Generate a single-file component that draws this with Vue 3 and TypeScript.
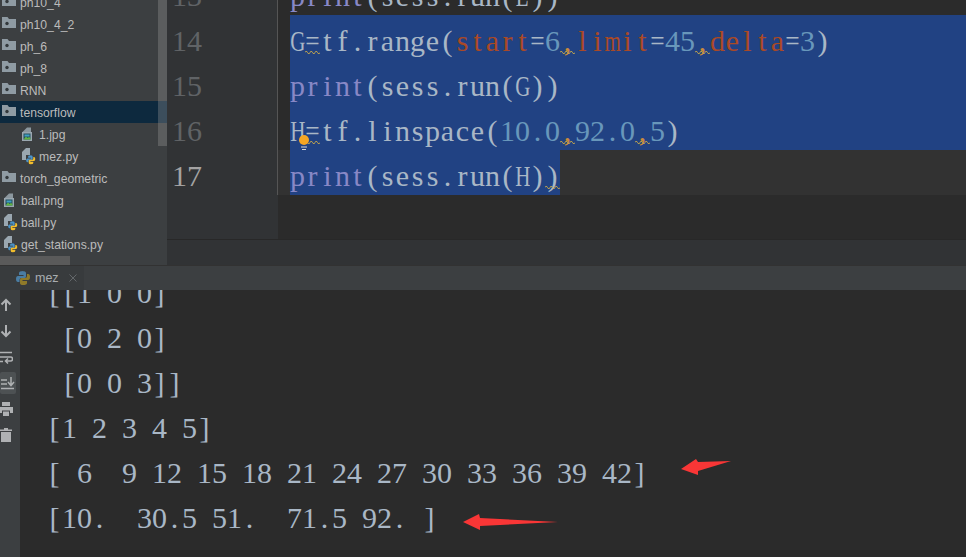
<script setup lang="ts">
import { computed } from "vue";

defineOptions({ name: "PycharmWindow" });

type Kind = "" | "fn" | "param" | "num" | "warn";
interface Token {
    t: string;
    k?: Kind;
}
interface CodeLine {
    no: number;
    tokens: Token[];
    full?: boolean; // selection runs to the right edge
    part?: boolean; // selection stops at the last char
    current?: boolean;
    waves?: number[];
}

const CODE: CodeLine[] = [
    { no: 13, tokens: [{ t: "print", k: "fn" }, { t: "(sess.run(E))" }] },
    {
        no: 14,
        full: true,
        waves: [1, 18, 27],
        tokens: [
            { t: "G=tf.range(" },
            { t: "start", k: "param" },
            { t: "=" },
            { t: "6", k: "num" },
            { t: ",", k: "warn" },
            { t: "limit", k: "param" },
            { t: "=" },
            { t: "45", k: "num" },
            { t: ",", k: "warn" },
            { t: "delta", k: "param" },
            { t: "=" },
            { t: "3", k: "num" },
            { t: ")" }
        ]
    },
    { no: 15, full: true, tokens: [{ t: "print", k: "fn" }, { t: "(sess.run(G))" }] },
    {
        no: 16,
        full: true,
        waves: [1, 18, 23],
        tokens: [
            { t: "H=tf.linspace(" },
            { t: "10.0", k: "num" },
            { t: ",", k: "warn" },
            { t: "92.0", k: "num" },
            { t: ",", k: "warn" },
            { t: "5", k: "num" },
            { t: ")" }
        ]
    },
    { no: 17, part: true, current: true, waves: [17], tokens: [{ t: "print", k: "fn" }, { t: "(sess.run(H))" }] }
];

const OUTPUT = [
    "[[1 0 0]",
    " [0 2 0]",
    " [0 0 3]]",
    "[1 2 3 4 5]",
    "[ 6  9 12 15 18 21 24 27 30 33 36 39 42]",
    "[10.  30.5 51.  71.5 92. ]"
];

const FILES = [
    { name: "ph10_4", icon: "dir" },
    { name: "ph10_4_2", icon: "dir" },
    { name: "ph_6", icon: "dir" },
    { name: "ph_8", icon: "dir" },
    { name: "RNN", icon: "dir" },
    { name: "tensorflow", icon: "dir", active: true },
    { name: "1.jpg", icon: "img", nested: true },
    { name: "mez.py", icon: "py", nested: true },
    { name: "torch_geometric", icon: "dir" },
    { name: "ball.png", icon: "img" },
    { name: "ball.py", icon: "py" },
    { name: "get_stations.py", icon: "py" },
    { name: "", icon: "py" }
];

const codeRows = computed(() =>
    CODE.map((line) => ({
        ...line,
        chars: line.tokens.flatMap((tk) => tk.t.split("").map((c) => ({ c, k: tk.k ?? "" })))
    }))
);

const outRows = computed(() => OUTPUT.map((l) => l.split("")));

// glyphs of the serif that are too wide for the 15px grid
const fit = (c: string) => {
    if (/[mGHE]/.test(c)) return "wide";
    return c === "=" ? "tight" : "";
};
</script>

<template>
    <div class="app">
        <div class="top">
            <aside class="tree">
                <div v-for="f in FILES" :key="f.name" class="tree-row" :class="{ active: f.active, nested: f.nested }">
                    <svg v-if="f.icon === 'dir'" width="16" height="16" viewBox="0 0 16 16">
                        <path d="M0 1h5.500l1.500 2h7v9H0z" fill="#8f9ba3" />
                        <circle cx="5" cy="7.500" r="1.700" fill="#33383b" />
                    </svg>
                    <svg v-else-if="f.icon === 'img'" width="16" height="16" viewBox="0 0 16 16">
                        <path d="M7 1.500h4V6H2.500z" fill="#8b979e" />
                        <rect x="2" y="6" width="10" height="9" fill="#9aa7b0" />
                        <rect x="3.500" y="7.500" width="7" height="6" fill="#24505f" />
                        <path d="M3.500 13.500l2.500-3 1.500 1.500 1.500-1 1.500 1v1.500z" fill="#62b543" />
                        <rect x="4.500" y="8.500" width="5" height="2" fill="#3f9fc4" />
                    </svg>
                    <svg v-else class="py-file" width="16" height="16" viewBox="0 0 16 16">
                        <path d="M6 0h4v7H6v5H2V4z" fill="#9aa7b0" />
                        <g transform="translate(5.500 6.500) scale(0.650)">
                            <path d="M8 1q-4 0-4 2v2h4.500v1H3q-2 0-2 3t2 3h1.500v-2q0-2 2-2h3q1.500 0 1.500-1.500V3q0-2-4-2z" fill="#4b94c9" />
                            <path d="M8 15q4 0 4-2v-2H7.500v-1H13q2 0 2-3t-2-3h-1v2q0 2-2 2H6.500Q5 8 5 9.500V13q0 2 3 2z" fill="#f2bd2c" />
                        </g>
                    </svg>
                    <span class="tree-name" :class="{ file: f.icon !== 'dir' }">{{ f.name }}</span>
                </div>
                <i class="vbar" />
                <i class="hbar" />
            </aside>

            <div class="editor-wrap">
                <main class="editor">
                    <div v-for="line in codeRows" :key="line.no" class="line" :class="{ current: line.current }">
                        <div class="gutter" :class="{ lit: line.current }">
                            <span v-for="(d, i) in String(line.no).split('')" :key="i" class="ch">{{ d }}</span>
                        </div>
                        <div class="code" :class="{ sel: line.full }">
                            <span
                                v-for="(ch, i) in line.chars"
                                :key="i"
                                class="ch"
                                :class="[ch.k, fit(ch.c), { sel: line.part }]"
                            >
                                <b>{{ ch.c }}</b>
                                <svg v-if="line.waves?.includes(i)" class="wave" width="15" height="5" viewBox="0 0 15 5">
                                    <path d="M0 2.500q1.250-3 2.500 0t2.500 0 2.500 0 2.500 0 2.500 0 2.500 0" fill="none" stroke="#c9a94c" />
                                </svg>
                            </span>
                        </div>
                    </div>
                </main>
                <div class="crumbs" />
            </div>
        </div>

        <div class="tabs">
            <div class="tab">
                <svg width="16" height="16" viewBox="0 0 16 16">
                    <path d="M8 1q-4 0-4 2v2h4.500v1H3q-2 0-2 3t2 3h1.500v-2q0-2 2-2h3q1.500 0 1.500-1.500V3q0-2-4-2z" fill="#4a7da3" />
                    <path d="M8 15q4 0 4-2v-2H7.500v-1H13q2 0 2-3t-2-3h-1v2q0 2-2 2H6.500Q5 8 5 9.500V13q0 2 3 2z" fill="#8f7a2a" />
                </svg>
                <span class="tab-name">mez</span>
                <svg class="tab-x" width="8" height="8" viewBox="0 0 8 8">
                    <path d="M0.500 0.500l7 7M7.500 0.500l-7 7" stroke="#63676a" fill="none" />
                </svg>
            </div>
        </div>

        <div class="run">
            <nav class="bar">
                <svg width="12" height="14" viewBox="0 0 12 14"><path d="M6 13V2M1.500 6.500L6 2l4.500 4.500" fill="none" stroke="#afb1b3" stroke-width="2" /></svg>
                <svg width="12" height="14" viewBox="0 0 12 14"><path d="M6 1v11M1.500 7.500L6 12l4.500-4.500" fill="none" stroke="#afb1b3" stroke-width="2" /></svg>
                <svg width="14" height="14" viewBox="0 0 14 14"><path d="M0 2.500h13M0 7h11.500q2 0 2 2t-2 2H7M9 8.500L6.500 11 9 13.500M0 11.500h4" fill="none" stroke="#afb1b3" stroke-width="1.500" /></svg>
                <span class="bar-on">
                    <svg width="14" height="14" viewBox="0 0 14 14"><path d="M0 4h6M0 8h6M0 12.500h13M10 1v8M7 6l3 3.500L13 6" fill="none" stroke="#afb1b3" stroke-width="1.500" /></svg>
                </span>
                <svg width="14" height="14" viewBox="0 0 14 14"><path d="M3 0h8v4H3zM0 5h14v6h-3V8.500H3V11H0zM4 9.500h6V14H4z" fill="#afb1b3" /></svg>
                <svg width="12" height="14" viewBox="0 0 12 14"><path d="M4 0h4v1.500h4V3H0V1.500h4zM1 4h10v10H1z" fill="#afb1b3" /></svg>
            </nav>
            <div class="console">
                <div v-for="(row, r) in outRows" :key="r" class="out">
                    <span v-for="(c, i) in row" :key="i" class="ch">{{ c }}</span>
                </div>
            </div>
        </div>

        <svg class="marks" width="966" height="557" viewBox="0 0 966 557">
            <!-- intention bulb -->
            <circle cx="304" cy="140" r="5" fill="#f5a623" />
            <path d="M301 147h6M302 149.500h4" stroke="#d8d8d8" fill="none" />
            <!-- arrows drawn on the screenshot -->
            <polygon points="681,469 696,459 698,462 731,461 698,471 698,475" fill="#f93636" />
            <polygon points="463,522 479,514 480,518 558,522 480,526 480,530" fill="#f93636" />
        </svg>
    </div>
</template>

<style scoped>
.app {
    position: relative;
    width: 966px;
    height: 557px;
    overflow: hidden;
    display: flex;
    flex-direction: column;
    background: #2b2b2b;
    font-family: "Liberation Serif", serif;
}

.top {
    display: flex;
    height: 265px;
    flex: none;
}

/* 文件树 */
.tree {
    position: relative;
    width: 167px;
    flex: none;
    overflow: hidden;
    background: #3c3f41;
    color: #bbbbbb;
    font: 12.2px "Liberation Sans", sans-serif;
}

.tree-row {
    display: flex;
    align-items: center;
    height: 22px;
    padding-left: 2px;
    gap: 2px;
}

.tree-row:first-child {
    margin-top: -9px;
}

.tree-row.nested {
    padding-left: 20px;
}

.tree-row.active {
    background: #0d293e;
}

.tree-row svg {
    flex: none;
}

.py-file {
    overflow: visible;
}

.tree-name {
    margin-top: 2px;
}

.tree-name.file {
    margin-left: 1px;
}

.vbar {
    position: absolute;
    top: 0;
    right: 0;
    width: 9px;
    height: 146px;
    background: rgba(150, 150, 150, 0.35);
}

.hbar {
    position: absolute;
    left: 0;
    bottom: 0;
    width: 70px;
    height: 9px;
    background: #5a5a5a;
}

/* 编辑器 */
.editor-wrap {
    flex: 1;
    display: flex;
    flex-direction: column;
}

.editor {
    height: 240px;
    overflow: hidden;
    background: linear-gradient(90deg, #313335 111px, #2b2b2b 111px);
    border-bottom: 1px solid #282828;
    box-sizing: border-box;
    font-size: 30px;
}

.line {
    display: flex;
    height: 45px;
}

.line:first-child {
    margin-top: -30px;
}

.gutter {
    display: flex;
    width: 111px;
    padding-left: 5px;
    box-sizing: border-box;
    flex: none;
    background: #313335;
    border-right: 1px solid #555555;
    color: #606366;
    line-height: 51px;
}

.gutter.lit {
    color: #a4a3a3;
}

.code {
    flex: 1;
    display: flex;
    margin-left: 12px;
    color: #a9b7c6;
    line-height: 51px;
}

.current .code {
    margin-left: 0;
    padding-left: 12px;
    background: #323232;
}

.sel {
    background: #214283;
}

.ch {
    position: relative;
    flex: none;
    display: flex;
    justify-content: center;
    width: 15px;
    white-space: pre;
}

.ch b {
    display: block;
    flex: none;
    font-weight: 400;
}

.wide b {
    transform: scaleX(0.7);
}

.tight b {
    transform: scaleX(0.85);
}

.fn {
    color: #8888c6;
}

.param {
    color: #aa4926;
}

.num {
    color: #6897bb;
}

.warn {
    color: #c98a3c;
}

.wave {
    position: absolute;
    left: 0;
    bottom: 5px;
}

.crumbs {
    flex: 1;
    background: #313335;
}

/* 运行窗口 */
.tabs {
    height: 25px;
    flex: none;
    display: flex;
    background: #3c3f41;
    border-top: 1px solid #323232;
    box-sizing: border-box;
}

.tab {
    display: flex;
    align-items: center;
    width: 84px;
    padding-left: 15px;
    box-sizing: border-box;
    background: #383b3d;
    color: #a8adb0;
    font: 12.5px "Liberation Sans", sans-serif;
}

.tab-name {
    margin-left: 4px;
}

.tab-x {
    margin-left: 10px;
}

.run {
    flex: 1;
    display: flex;
    min-height: 0;
}

.bar {
    width: 20px;
    flex: none;
    display: flex;
    flex-direction: column;
    align-items: center;
    padding-top: 8px;
    gap: 12px;
    box-sizing: border-box;
    background: #3c3f41;
}

.bar svg {
    display: block;
    flex: none;
    margin-left: -8px;
}

.bar-on {
    display: flex;
    align-items: center;
    justify-content: center;
    flex: none;
    width: 16px;
    height: 22px;
    margin: -4px 0 -4px -4px;
    border-radius: 2px;
    background: #4d5153;
}

.bar-on svg {
    margin-left: 0;
}

.console {
    flex: 1;
    overflow: hidden;
    padding-left: 27px;
    color: #a9b7c6;
    font-size: 30px;
    line-height: 45px;
}

.out {
    display: flex;
    height: 45px;
}

.out:first-child {
    margin-top: -20px;
}

.marks {
    position: absolute;
    inset: 0;
    pointer-events: none;
}
</style>
